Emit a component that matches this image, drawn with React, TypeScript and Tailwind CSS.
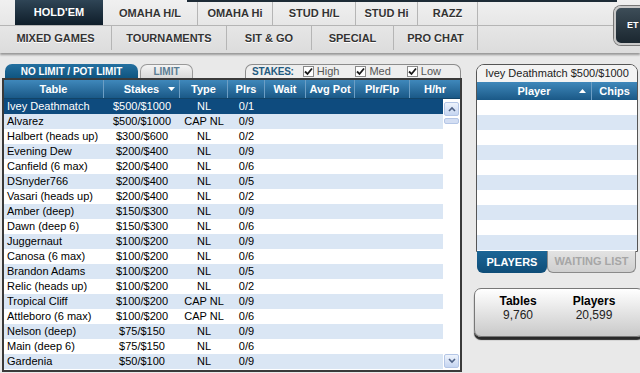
import React from "react";

const font = { fontFamily: '"Liberation Sans", Arial, sans-serif' };

const row1 = [
  { label: "HOLD'EM", w: 88, active: true },
  { label: "OMAHA H/L", w: 95 },
  { label: "OMAHA Hi", w: 75 },
  { label: "STUD H/L", w: 83 },
  { label: "STUD Hi", w: 62 },
  { label: "RAZZ", w: 60 },
];

const row2 = [
  { label: "MIXED GAMES", w: 112 },
  { label: "TOURNAMENTS", w: 115 },
  { label: "SIT & GO", w: 85 },
  { label: "SPECIAL", w: 82 },
  { label: "PRO CHAT", w: 84 },
];

const cols = [
  { label: "Table", w: 100 },
  { label: "Stakes", w: 76, sort: "down" },
  { label: "Type", w: 48 },
  { label: "Plrs", w: 37 },
  { label: "Wait", w: 41 },
  { label: "Avg Pot", w: 49 },
  { label: "Plr/Flp", w: 55 },
  { label: "H/hr", w: 50 },
];

const tables = [
  ["Ivey Deathmatch", "$500/$1000", "NL", "0/1"],
  ["Alvarez", "$500/$1000", "CAP NL", "0/9"],
  ["Halbert (heads up)", "$300/$600", "NL", "0/2"],
  ["Evening Dew", "$200/$400", "NL", "0/9"],
  ["Canfield (6 max)", "$200/$400", "NL", "0/6"],
  ["DSnyder766", "$200/$400", "NL", "0/5"],
  ["Vasari (heads up)", "$200/$400", "NL", "0/2"],
  ["Amber (deep)", "$150/$300", "NL", "0/9"],
  ["Dawn (deep 6)", "$150/$300", "NL", "0/6"],
  ["Juggernaut", "$100/$200", "NL", "0/9"],
  ["Canosa (6 max)", "$100/$200", "NL", "0/6"],
  ["Brandon Adams", "$100/$200", "NL", "0/5"],
  ["Relic (heads up)", "$100/$200", "NL", "0/2"],
  ["Tropical Cliff", "$100/$200", "CAP NL", "0/9"],
  ["Attleboro (6 max)", "$100/$200", "CAP NL", "0/6"],
  ["Nelson (deep)", "$75/$150", "NL", "0/9"],
  ["Main (deep 6)", "$75/$150", "NL", "0/6"],
  ["Gardenia", "$50/$100", "NL", "0/9"],
];

function Check({ label }: { label: string }) {
  return (
    <div className="flex items-center gap-[3px]">
      <div className="w-[11px] h-[11px] border border-[#8a8a8a] bg-white flex items-center justify-center">
        <svg width="9" height="9" viewBox="0 0 9 9">
          <path d="M1 4.5 L3.5 7 L8 1.5" stroke="#1a1a1a" strokeWidth="1.8" fill="none" />
        </svg>
      </div>
      <span className="text-[11px] text-[#555]">{label}</span>
    </div>
  );
}

function Chevron({ up }: { up?: boolean }) {
  return (
    <div className="h-[14px] mx-[1px] rounded-[2px] border border-[#b4c6e6] bg-gradient-to-b from-[#eef3fc] to-[#c5d5f1] flex items-center justify-center">
      <svg width="8" height="6" viewBox="0 0 8 6">
        <path d={up ? "M1 5 L4 2 L7 5" : "M1 1 L4 4 L7 1"} stroke="#4d6185" strokeWidth="1.6" fill="none" />
      </svg>
    </div>
  );
}

export default function App() {
  return (
    <div className="w-[640px] h-[373px] overflow-hidden bg-[#e9e9e9] text-black" style={font}>
      {/* game nav */}
      <div className="flex h-[53px] bg-gradient-to-b from-[#f0f0f0] to-[#dcdcdc] shadow-[0_2px_2px_rgba(0,0,0,0.35)] relative">
        <div className="w-[612px] flex flex-col">
          <div className="flex h-[26px] border-b border-[#b5b5b5]">
            <div className="w-[15px]" />
            {row1.map((t) => (
              <div
                key={t.label}
                className={
                  t.active
                    ? "flex items-center justify-center text-[11px] font-bold text-white bg-gradient-to-b from-[#2f4556] to-[#0f1e2a]"
                    : "flex items-center justify-center pt-[2px] text-[11px] font-bold text-[#333] border-r border-[#b5b5b5] [text-shadow:0_1px_0_#fff]"
                }
                style={{ width: t.w }}
              >
                {t.label}
              </div>
            ))}
          </div>
          <div className="flex h-[24px]">
            {row2.map((t) => (
              <div
                key={t.label}
                className="flex items-center justify-center text-[11px] font-bold text-[#333] border-r border-[#b5b5b5] [text-shadow:0_1px_0_#fff]"
                style={{ width: t.w }}
              >
                {t.label}
              </div>
            ))}
          </div>
        </div>
        <div className="flex-1 h-[26px] border-b border-[#b5b5b5]" />
        <div className="absolute left-[187px] top-0 w-[430px] h-[2px] bg-[#1d2b36]" />
        <div className="absolute left-[614px] top-[6px] w-[40px] h-[39px] rounded-[7px] border-2 border-[#c9c9c9] bg-gradient-to-b from-[#3d4d58] to-[#1b2730] shadow-[0_0_0_1px_#777] flex items-center pl-[11px]">
          <span className="text-[9px] font-bold text-white">ET</span>
        </div>
      </div>

      <div className="flex pt-[11px]">
        {/* left lobby */}
        <div className="ml-[2px] w-[460px] flex flex-col">
          <div className="flex h-[14px] items-end">
            <div className="ml-[3px] w-[133px] h-[14px] rounded-t-[7px] bg-gradient-to-b from-[#2470a0] to-[#0f5580] flex items-center justify-center text-[10px] font-bold text-white">
              NO LIMIT / POT LIMIT
            </div>
            <div className="ml-[2px] w-[53px] h-[14px] rounded-t-[7px] border border-b-0 border-[#999] bg-gradient-to-b from-[#f4f4f4] to-[#d9d9d9] flex items-center justify-center text-[10px] font-bold text-[#5a7c93]">
              LIMIT
            </div>
            <div className="ml-auto mr-[1px] w-[216px] h-[14px] rounded-t-[7px] border border-b-0 border-[#8c8c8c] bg-[#eeeeee] flex items-center pl-[6px] gap-[9px]">
              <span className="text-[10px] font-bold text-[#1f5a80] tracking-[-0.2px]">STAKES:</span>
              <div className="flex gap-[16px]">
                <Check label="High" />
                <Check label="Med" />
                <Check label="Low" />
              </div>
            </div>
          </div>
          <div className="h-[294px] border-2 border-[#3a3a3a] bg-white flex flex-col">
            <div className="flex h-[19px] bg-gradient-to-b from-[#3f88bb] to-[#1a5987] border-b border-[#124468]">
              {cols.map((c, i) => (
                <div
                  key={c.label}
                  className={
                    "relative flex items-center justify-center text-[11px] font-bold text-white " +
                    (i < cols.length - 1 ? "border-r border-[#6d9ec4]" : "")
                  }
                  style={{ width: c.w }}
                >
                  {c.label}
                  {c.sort && (
                    <svg className="absolute right-[4px] top-[7px]" width="7" height="4" viewBox="0 0 7 4">
                      <path d="M0 0 L7 0 L3.5 4 Z" fill="#fff" />
                    </svg>
                  )}
                </div>
              ))}
            </div>
            <div className="flex flex-1">
              <div className="w-[439px] flex flex-col">
                {tables.map((r, i) => {
                  const sel = i === 0;
                  const bg = sel ? "bg-[#0e4b7e] text-white" : i % 2 === 1 ? "bg-[#dae6f4]" : "bg-white";
                  return (
                    <div key={r[0]} className={"flex h-[15px] items-center text-[11px] " + bg}>
                      <div className="w-[100px] pl-[3px] whitespace-nowrap">{r[0]}</div>
                      <div className="w-[76px] text-center">{r[1]}</div>
                      <div className="w-[48px] text-center">{r[2]}</div>
                      <div className="w-[37px] text-center">{r[3]}</div>
                    </div>
                  );
                })}
              </div>
              <div className="w-[17px] bg-white flex flex-col pt-[3px] pb-[2px]">
                <Chevron up />
                <div className="mt-[2px] h-[6px] mx-[1px] rounded-[2px] border border-[#b4c6e6] bg-[#d3def3]" />
                <div className="flex-1" />
                <Chevron />
              </div>
            </div>
          </div>
        </div>

        {/* right players */}
        <div className="ml-[14px] w-[162px] flex flex-col">
          <div className="h-[188px] rounded-t-[8px] border border-[#555] bg-white flex flex-col overflow-hidden">
            <div className="h-[17px] bg-[#f3f3f3] flex items-center justify-center text-[11px] text-[#222]">
              Ivey Deathmatch $500/$1000
            </div>
            <div className="flex h-[18px] bg-gradient-to-b from-[#3f88bb] to-[#1a5987]">
              <div className="relative w-[115px] border-r border-[#6d9ec4] flex items-center justify-center text-[11px] font-bold text-white">
                Player
                <svg className="absolute right-[5px] top-[7px]" width="7" height="4" viewBox="0 0 7 4">
                  <path d="M0 4 L7 4 L3.5 0 Z" fill="#fff" />
                </svg>
              </div>
              <div className="flex-1 flex items-center justify-center text-[11px] font-bold text-white">Chips</div>
            </div>
            {Array.from({ length: 10 }).map((_, i) => (
              <div key={i} className={"h-[15px] shrink-0 " + (i % 2 === 1 ? "bg-[#dae6f4]" : "bg-white")} />
            ))}
          </div>
          <div className="flex h-[22px] -mt-[1px]">
            <div className="w-[70px] ml-[1px] rounded-b-[6px] bg-gradient-to-b from-[#1c6696] to-[#0e4d78] flex items-center justify-center text-[11px] font-bold text-white">
              PLAYERS
            </div>
            <div className="w-[89px] rounded-b-[6px] border border-t-0 border-[#8a8a8a] bg-gradient-to-b from-[#e3e3e3] to-[#cfcfcf] flex items-center justify-center text-[11px] font-bold text-[#a6a6a6]">
              WAITING LIST
            </div>
          </div>
          <div className="mt-[15px] -ml-[2px] w-[170px] h-[49px] rounded-[7px] border border-[#777] bg-gradient-to-b from-[#ffffff] to-[#c9c9c9] shadow-[0_3px_1px_#2a2a2a] flex pt-[5px]">
            <div className="w-[86px] flex flex-col items-center leading-[14px]">
              <span className="text-[12px] font-bold">Tables</span>
              <span className="text-[12px] text-[#222]">9,760</span>
            </div>
            <div className="w-[66px] flex flex-col items-center leading-[14px]">
              <span className="text-[12px] font-bold">Players</span>
              <span className="text-[12px] text-[#222]">20,599</span>
            </div>
          </div>
        </div>
      </div>
    </div>
  );
}
